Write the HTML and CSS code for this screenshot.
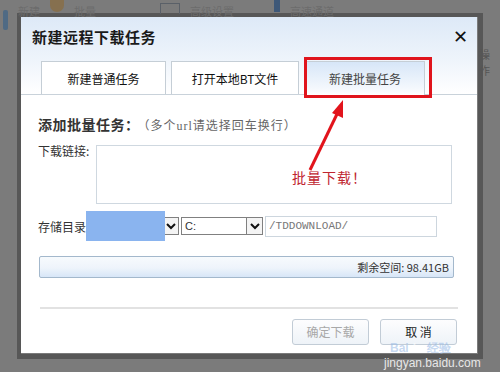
FILE: index.html
```html
<!DOCTYPE html>
<html>
<head lang="zh">
    <meta charset="utf-8">
    <title>新建远程下载任务</title>
    <link rel="stylesheet" href="styles.css">
</head>
<body>
<div class="toolbar">
    <i class="tb-blue"></i>
    <span class="tb-text">新建</span>
    <i class="tb-orange"></i>
    <span class="tb-text">批量</span>
    <i class="tb-box"></i>
    <span class="tb-text">高级设置</span>
    <i class="tb-pen"></i>
    <span class="tb-text">高速通道</span>
</div>
<span class="side-op">操作</span>

<div class="dialog">
    <div class="dialog-inner">
        <div class="head">
            <div class="title-row">
                <span class="title">新建远程下载任务</span>
                <span class="close">&#x2715;</span>
            </div>
            <ul class="tabs">
                <li class="tab tab-1">新建普通任务</li>
                <li class="tab tab-2">打开本地BT文件</li>
                <li class="tab tab-3 active">新建批量任务</li>
            </ul>
        </div>

        <div class="body">
            <div class="section-title">
                <b>添加批量任务：</b><span class="hint">（多个url请选择回车换行）</span>
            </div>
            <div class="link-row">
                <label for="links">下载链接:</label>
                <div class="links" id="links"></div>
            </div>
            <div class="store-row">
                <label>存储目录</label>
                <div class="select select-1">
                    <span class="select-text"></span>
                    <span class="chev"><svg width="10" height="8" viewBox="0 0 10 8"><path d="M1 2 L5 6 L9 2" fill="none" stroke="#111" stroke-width="2"/></svg></span>
                    <i class="mask"></i>
                </div>
                <div class="select select-2">
                    <span class="select-text">C:</span>
                    <span class="chev"><svg width="10" height="8" viewBox="0 0 10 8"><path d="M1 2 L5 6 L9 2" fill="none" stroke="#111" stroke-width="2"/></svg></span>
                </div>
                <div class="path">/TDDOWNLOAD/</div>
            </div>
            <div class="space">剩余空间: 98.41GB</div>
            <div class="sep"></div>
            <div class="buttons">
                <span class="btn disabled">确定下载</span>
                <span class="btn">取 消</span>
            </div>
        </div>

        <div class="note">批量下载！</div>
        <svg class="arrow" width="60" height="80" viewBox="0 0 60 80">
            <path d="M5 72 L33 14" stroke="#e2141c" stroke-width="3" fill="none"/>
            <path d="M38 2 L27 15 L38 20 Z" fill="#e2141c"/>
        </svg>
    </div>
</div>

<div class="watermark">Bai<span>du</span> 经验</div>
<div class="jingyan">jingyan.baidu.com</div>
</body>
</html>
```
FILE: styles.css
```css
body {
    margin: 0;
    width: 500px;
    height: 372px;
    overflow: hidden;
    background: #7b7b7b;
    font-family: "Noto Sans CJK SC", "Liberation Sans", sans-serif;
    position: relative;
}

ul {
    margin: 0;
    padding: 0;
    list-style: none;
}

/* background (dimmed) */
.toolbar {
    height: 13px;
    display: flex;
    align-items: flex-start;
    gap: 10px;
    padding-left: 3px;
    color: #6c6c6c;
    font-size: 11px;
    line-height: 13px;
    overflow: visible;
}
.toolbar i {
    display: inline-block;
}
.tb-blue {
    width: 5px;
    height: 20px;
    margin-top: 10px;
    background: #4f6a84;
    border-radius: 2px;
}
.tb-orange {
    width: 14px;
    height: 12px;
    border-radius: 0 0 7px 7px;
    background: #86704f;
}
.tb-box {
    width: 18px;
    height: 10px;
    margin-left: 54px;
    margin-top: 3px;
    border: 1px solid #5a6068;
    border-bottom: 0;
}
.tb-pen {
    width: 6px;
    height: 12px;
    margin-left: 30px;
    background: #3e5878;
}
.tb-text {
    padding-top: 5px;
}
.side-op {
    position: absolute;
    left: 479px;
    top: 46px;
    font-size: 11px;
    color: #555;
}

/* dialog */
.dialog {
    margin: 0 0 0 17px;
    width: 457px;
    height: 337px;
    border: 4px solid #575757;
    border-right-width: 5px;
    border-bottom-width: 5px;
}
.dialog-inner {
    position: relative;
    width: 456px;
    height: 336px;
    background: #fff;
}

.head {
    height: 77px;
    border-bottom: 1px solid #c9d2da;
    background: linear-gradient(#dde9f7, #eef4fb 55%, #ffffff);
}
.title-row {
    height: 40px;
    display: flex;
    align-items: center;
    justify-content: space-between;
    padding: 0 9px 0 11px;
}
.title {
    font-size: 15px;
    font-weight: bold;
    color: #1a1a1a;
    letter-spacing: 0.5px;
    margin-top: -2px;
}
.close {
    font-size: 18px;
    color: #111;
    font-family: "DejaVu Sans", sans-serif;
    margin-top: -1px;
}

.tabs {
    display: flex;
    margin: 4px 0 0 20px;
}
.tab {
    height: 33px;
    box-sizing: border-box;
    border: 1px solid #c5ced6;
    border-bottom: 0;
    background: #fff;
    font-size: 12px;
    color: #111;
    text-align: center;
    line-height: 34px;
}
.tab-1 {
    width: 125px;
}
.tab-2 {
    width: 128px;
    margin-left: 5px;
}
.tab-3 {
    width: 120px;
    margin-left: 6px;
    position: relative;
    height: 34px;
    margin-bottom: -1px;
    color: #444;
    background: linear-gradient(#d7e6f8, #f4f8fd 80%, #fff);
}
.tab-3::after {
    content: "";
    position: absolute;
    left: -2px;
    top: -5px;
    right: -8px;
    bottom: -3px;
    border: 3px solid #e0141c;
}

.body {
    padding: 20px 20px 0 17px;
}
.section-title {
    font-size: 14px;
    line-height: 18px;
    color: #333;
}
.section-title b {
    letter-spacing: 0.5px;
}
.hint {
    font-size: 12px;
    color: #666;
    font-family: "Liberation Serif", "Noto Sans CJK SC", serif;
    letter-spacing: 1px;
    margin-left: 4px;
}

.link-row {
    display: flex;
    margin-top: 8px;
}
.link-row label {
    width: 58px;
    font-size: 12px;
    color: #333;
    line-height: 16px;
}
.links {
    width: 354px;
    height: 57px;
    border: 1px solid #cfd8e0;
    margin-top: 2px;
}

.store-row {
    display: flex;
    align-items: center;
    margin-top: 7px;
    height: 30px;
}
.store-row label {
    width: 48px;
    font-size: 12px;
    color: #333;
}
.select {
    display: flex;
    height: 18px;
    box-sizing: border-box;
    border: 1px solid #808080;
    background: #fff;
    position: relative;
}
.select-1 {
    width: 93px;
}
.select-2 {
    width: 82px;
    margin-left: 2px;
}
.select-text {
    flex: 1;
    font-size: 11px;
    line-height: 16px;
    padding-left: 3px;
    color: #333;
    font-family: "Liberation Sans", sans-serif;
}
.chev {
    width: 15px;
    border-left: 1px solid #808080;
    display: flex;
    align-items: center;
    justify-content: center;
    background: #f4f4f4;
}
.mask {
    position: absolute;
    left: -1px;
    top: -7px;
    width: 79px;
    height: 30px;
    background: #8ab4ef;
}
.path {
    width: 172px;
    height: 21px;
    box-sizing: border-box;
    margin-left: 2px;
    border: 1px solid #cdd6de;
    font-family: "Liberation Mono", monospace;
    font-size: 11px;
    line-height: 19px;
    padding-left: 3px;
    color: #777;
}

.space {
    margin: 15px 0 0 1px;
    width: 415px;
    height: 22px;
    box-sizing: border-box;
    border: 1px solid #a3b8cc;
    border-radius: 2px;
    background: linear-gradient(#f7fafd, #eef4fb 55%, #d7e6f7);
    text-align: right;
    font-size: 11px;
    line-height: 20px;
    padding-right: 4px;
    color: #333;
}

.sep {
    margin: 29px 0 0 2px;
    width: 418px;
    height: 2px;
    background: #e2e2e2;
}

.buttons {
    display: flex;
    justify-content: flex-end;
    gap: 11px;
    margin-top: 10px;
}
.btn {
    width: 77px;
    height: 26px;
    box-sizing: border-box;
    border: 1px solid #c2ccd6;
    border-radius: 3px;
    background: linear-gradient(#fdfdfe, #eef3f8);
    font-size: 12px;
    line-height: 24px;
    text-align: center;
    color: #222;
}
.btn.disabled {
    color: #a8a8a8;
}

/* annotation */
.note {
    position: absolute;
    left: 271px;
    top: 150px;
    font-size: 14px;
    color: #bf2530;
    letter-spacing: 1px;
}
.arrow {
    position: absolute;
    left: 284px;
    top: 81px;
}

.watermark {
    position: absolute;
    left: 390px;
    top: 342px;
    font-family: "Liberation Sans", sans-serif;
    font-size: 12px;
    line-height: 13px;
    font-weight: bold;
    color: rgba(150, 185, 230, 0.55);
}
.watermark span {
    color: rgba(255, 255, 255, 0.6);
}
.jingyan {
    position: absolute;
    left: 384px;
    top: 356px;
    font-family: "Liberation Sans", sans-serif;
    font-size: 12px;
    line-height: 14px;
    color: #e8e8e8;
}
```
